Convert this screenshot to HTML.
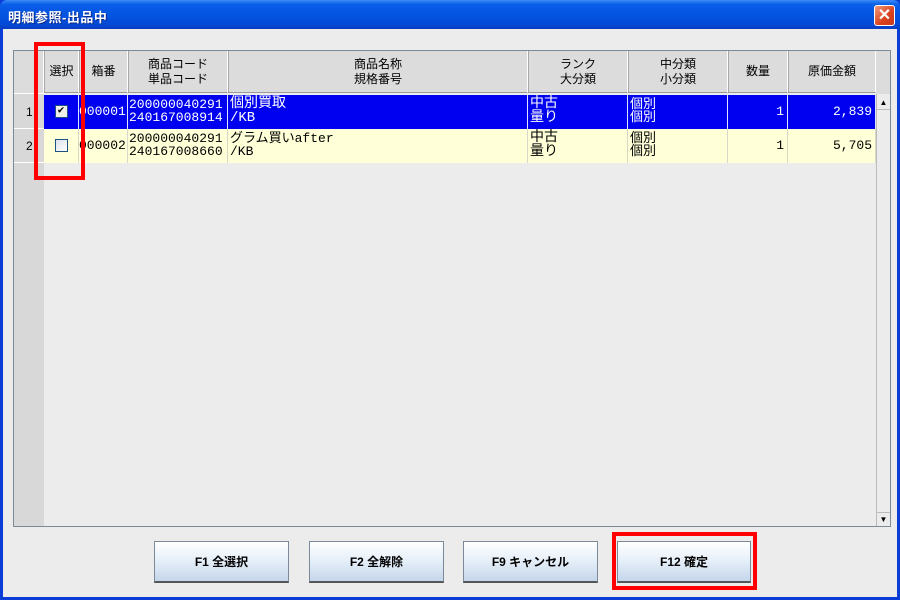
<!DOCTYPE html>
<html><head><meta charset="utf-8"><style>
*{margin:0;padding:0;box-sizing:border-box}
body{width:900px;height:600px;overflow:hidden;background:#0a3dd6;font-family:"Liberation Sans","Noto Sans CJK JP",sans-serif;position:relative}
.a{position:absolute}
#title{left:0;top:0;width:900px;height:29px;background:linear-gradient(#3b8cf5 0%,#0a5fe8 15%,#0454e2 50%,#0349d6 85%,#0a3dc0 100%);border-radius:7px 7px 0 0}
#tt{left:8px;top:7px;color:#fff;font-size:13px;font-weight:bold;letter-spacing:0.5px;text-shadow:1px 1px #0a2a8a}
#close{left:874px;top:5px;width:21px;height:21px;border:1px solid #fff;border-radius:3px;background:linear-gradient(135deg,#f19a7e,#d9421c 60%,#c8381a);color:#fff;font-size:16px;font-weight:bold;text-align:center;line-height:19px}
#content{left:3px;top:29px;width:894px;height:568px;background:#ececec}
#tbl{left:13px;top:50px;width:878px;height:477px;border:1px solid #7a8a99;background:#ececec}
.h{position:absolute;top:51px;height:42px;background:#dcdcdc;border-right:1px solid #fff;border-left:1px solid #a8a8a8;font-size:12px;text-align:center;line-height:15px;color:#000;display:flex;align-items:center;justify-content:center;border-bottom:1px solid #999}
.c{position:absolute;font-size:13px;line-height:13px;font-family:"Liberation Mono","Noto Sans CJK JP",monospace;padding-top:3px;border-right:1px solid #d8d8c8;overflow:hidden;white-space:nowrap}
.r1{top:95px;height:34px;background:#0000f0;color:#fff;border-right-color:#e0e0ff}
.r2{top:129px;height:34px;background:#ffffd8;color:#000}
.btn{position:absolute;top:541px;height:42px;width:135px;border:1px solid #7a8a99;border-bottom:2px solid #555;background:linear-gradient(#fff,#e4eef8 50%,#c4d6ea);font-size:12px;font-weight:bold;text-align:center;line-height:40px}
.red{position:absolute;border:4px solid #f00}
</style></head><body>
<div id="title" class="a"></div>
<div id="tt" class="a">明細参照-出品中</div>
<div id="close" class="a">✕</div>
<div id="content" class="a"></div>
<div id="tbl" class="a"></div>
<div class="a" style="left:14px;top:51px;width:30px;height:475px;background:#d8d8d8"></div>
<div class="a" style="left:14px;top:51px;width:30px;height:43px;background:#dcdcdc;border-right:1px solid #fff;border-bottom:1px solid #fff"></div>
<div class="h" style="left:44px;width:35px">選択</div>
<div class="h" style="left:79px;width:49px">箱番</div>
<div class="h" style="left:128px;width:100px">商品コード<br>単品コード</div>
<div class="h" style="left:228px;width:300px">商品名称<br>規格番号</div>
<div class="h" style="left:528px;width:100px">ランク<br>大分類</div>
<div class="h" style="left:628px;width:100px">中分類<br>小分類</div>
<div class="h" style="left:728px;width:60px">数量</div>
<div class="h" style="left:788px;width:88px">原価金額</div>
<div class="a" style="left:876px;top:51px;width:14px;height:43px;background:#dcdcdc"></div>
<!-- row headers -->
<div class="a" style="left:14px;top:95px;width:30px;height:34px;border-bottom:1px solid #fff;font-size:12px;padding:10px 0 0 12px">1</div>
<div class="a" style="left:14px;top:129px;width:30px;height:34px;border-bottom:1px solid #fff;font-size:12px;padding:10px 0 0 12px">2</div>
<!-- row1 -->
<div class="c r1" style="left:44px;width:35px"><div style="margin:7px auto 0;width:13px;height:13px;border:1px solid #1c5180;background:#f0f0ea;color:#000;font-size:11px;line-height:11px;text-align:center">✔</div></div>
<div class="c r1" style="left:79px;width:49px;padding-top:10px;direction:rtl;text-align:left">000001</div>
<div class="c r1" style="left:128px;width:100px;padding-left:1px">200000040291<br>240167008914</div>
<div class="c r1" style="left:228px;width:300px;padding-left:2px;font-size:14px;line-height:14px;padding-top:2px">個別買取<br>/KB</div>
<div class="c r1" style="left:528px;width:100px;font-size:14px;line-height:14px;padding-top:2px;padding-left:2px">中古<br>量り</div>
<div class="c r1" style="left:628px;width:100px;padding-left:2px">個別<br>個別</div>
<div class="c r1" style="left:728px;width:60px;text-align:right;padding:10px 3px 0 0">1</div>
<div class="c r1" style="left:788px;width:88px;text-align:right;padding:10px 3px 0 0">2,839</div>
<!-- row2 -->
<div class="c r2" style="left:44px;width:35px"><div style="margin:7px auto 0;width:13px;height:13px;border:1px solid #1c5180;background:linear-gradient(135deg,#dde3ec,#fff)"></div></div>
<div class="c r2" style="left:79px;width:49px;padding-top:10px;direction:rtl;text-align:left">000002</div>
<div class="c r2" style="left:128px;width:100px;padding-left:1px">200000040291<br>240167008660</div>
<div class="c r2" style="left:228px;width:300px;padding-left:2px">グラム買いafter<br>/KB</div>
<div class="c r2" style="left:528px;width:100px;font-size:14px;line-height:14px;padding-top:2px;padding-left:2px">中古<br>量り</div>
<div class="c r2" style="left:628px;width:100px;padding-left:2px">個別<br>個別</div>
<div class="c r2" style="left:728px;width:60px;text-align:right;padding:10px 3px 0 0">1</div>
<div class="c r2" style="left:788px;width:88px;text-align:right;padding:10px 3px 0 0">5,705</div>
<!-- scrollbar -->
<div class="a" style="left:876px;top:94px;width:14px;height:432px;background:#ececec;border-left:1px solid #bbb"></div>
<div class="a" style="left:877px;top:95px;width:13px;height:15px;font-size:8px;text-align:center;line-height:15px;border-bottom:1px solid #bbb">▲</div>
<div class="a" style="left:877px;top:512px;width:13px;height:14px;font-size:8px;text-align:center;line-height:14px;border-top:1px solid #bbb">▼</div>
<!-- buttons -->
<div class="btn" style="left:154px">F1 全選択</div>
<div class="btn" style="left:309px">F2 全解除</div>
<div class="btn" style="left:463px">F9 キャンセル</div>
<div class="btn" style="left:617px;width:134px">F12 確定</div>
<!-- red boxes -->
<div class="red" style="left:34px;top:42px;width:51px;height:138px"></div>
<div class="red" style="left:612px;top:532px;width:145px;height:58px"></div>
</body></html>
